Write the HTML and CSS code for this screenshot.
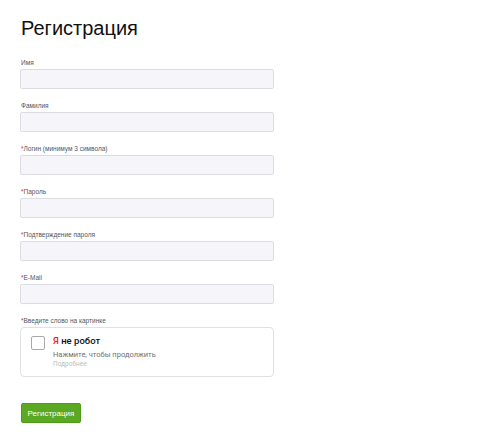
FILE: index.html
```html
<!DOCTYPE html>
<html lang="ru">
<head>
<meta charset="utf-8">
<title>Регистрация</title>
<link rel="stylesheet" href="styles.css">
</head>
<body>
<div class="page">
  <h1 class="title">Регистрация</h1>
  <form class="form">
    <div class="field">
      <label class="label">Имя</label>
      <input class="input" type="text">
    </div>
    <div class="field">
      <label class="label">Фамилия</label>
      <input class="input" type="text">
    </div>
    <div class="field">
      <label class="label"><span class="req">*</span>Логин (минимум 3 символа)</label>
      <input class="input" type="text">
    </div>
    <div class="field">
      <label class="label"><span class="req">*</span>Пароль</label>
      <input class="input" type="password">
    </div>
    <div class="field">
      <label class="label"><span class="req">*</span>Подтверждение пароля</label>
      <input class="input" type="password">
    </div>
    <div class="field">
      <label class="label"><span class="req">*</span>E-Mail</label>
      <input class="input" type="text">
    </div>
    <div class="field">
      <label class="label"><span class="req">*</span>Введите слово на картинке</label>
      <div class="captcha">
        <span class="checkbox"></span>
        <div class="captcha-text">
          <div class="captcha-title"><span class="ya">Я</span> не робот</div>
          <div class="captcha-sub">Нажмите, чтобы продолжить</div>
          <div class="captcha-more">Подробнее</div>
        </div>
      </div>
    </div>
    <button class="btn" type="button">Регистрация</button>
  </form>
</div>
</body>
</html>
```

FILE: styles.css
```css
html, body {
  margin: 0;
  padding: 0;
  background: #fff;
}
body {
  font-family: "Liberation Sans", Arial, sans-serif;
  color: #222;
}
.page {
  padding: 15px 0 0 20px;
}
.title {
  margin: 0 0 0 1px;
  font-size: 20px;
  line-height: 26px;
  font-weight: normal;
  color: #111;
}
.form {
  display: flex;
  flex-direction: column;
  margin-top: 17px;
  width: 254px;
}
.field {
  display: flex;
  flex-direction: column;
  gap: 2px;
  margin-bottom: 12px;
}
.label {
  font-size: 6.5px;
  line-height: 9px;
  color: #4c5866;
  padding-left: 1px;
}
.req {
  color: #e0271f;
}
.input {
  box-sizing: border-box;
  height: 20px;
  width: 254px;
  margin: 0;
  border: 1px solid #dcdde2;
  border-radius: 2px;
  background: #f6f6fa;
  outline: none;
}
.captcha {
  box-sizing: border-box;
  height: 50px;
  border: 1px solid #e1e1e1;
  border-radius: 4px;
  display: flex;
  align-items: flex-start;
  padding: 6px 0 0 10px;
  gap: 8px;
  background: #fff;
}
.checkbox {
  box-sizing: border-box;
  width: 14px;
  height: 14px;
  border: 1px solid #a9a9a9;
  border-radius: 2px;
  margin-top: 2px;
  background: #fff;
  flex: none;
}
.captcha-text {
  display: flex;
  flex-direction: column;
}
.captcha-title {
  font-family: Roboto, "Liberation Sans", sans-serif;
  font-weight: 500;
  font-size: 9.5px;
  line-height: 14px;
  color: #111;
}
.ya {
  color: #f0211b;
}
.captcha-sub {
  font-family: Roboto, "Liberation Sans", sans-serif;
  font-size: 7.5px;
  line-height: 10px;
  margin-top: 2px;
  color: #707070;
}
.captcha-more {
  font-family: Roboto, "Liberation Sans", sans-serif;
  font-size: 6.5px;
  line-height: 8px;
  color: #bcbcbc;
}
.btn {
  align-self: flex-start;
  margin: 14px 0 0 1px;
  box-sizing: border-box;
  height: 20px;
  width: 60px;
  padding: 0;
  border: 1px solid #4f9a1b;
  border-radius: 2px;
  background: #5ba823;
  color: #fff;
  font-family: "Liberation Sans", Arial, sans-serif;
  font-size: 8px;
  cursor: pointer;
}
```
